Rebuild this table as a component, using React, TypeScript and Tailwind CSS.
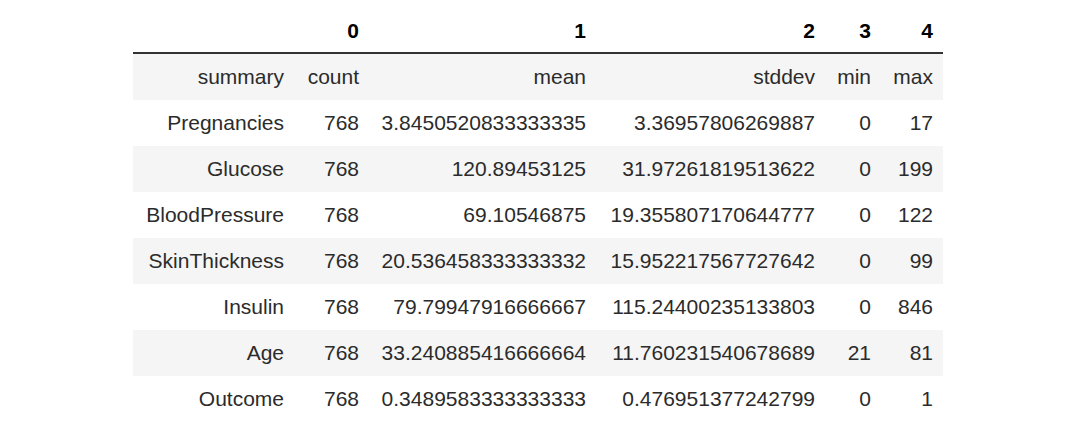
import React from "react";

const header = ["", "0", "1", "2", "3", "4"];

const rows = [
  ["summary", "count", "mean", "stddev", "min", "max"],
  ["Pregnancies", "768", "3.8450520833333335", "3.36957806269887", "0", "17"],
  ["Glucose", "768", "120.89453125", "31.97261819513622", "0", "199"],
  ["BloodPressure", "768", "69.10546875", "19.355807170644777", "0", "122"],
  ["SkinThickness", "768", "20.536458333333332", "15.952217567727642", "0", "99"],
  ["Insulin", "768", "79.79947916666667", "115.24400235133803", "0", "846"],
  ["Age", "768", "33.240885416666664", "11.760231540678689", "21", "81"],
  ["Outcome", "768", "0.3489583333333333", "0.476951377242799", "0", "1"],
];

const widths = ["w-[161px]", "w-[75px]", "w-[227px]", "w-[229px]", "w-[56px]", "w-[62px]"];

function App() {
  return (
    <div className="w-[1080px] h-[447px] bg-white overflow-hidden font-['Liberation_Sans',Arial,sans-serif] text-[21px]">
      <div className="ml-[133px] pt-[9px] w-[810px]">
        <div className="flex h-[45px] items-center border-b-2 border-[#333] font-bold text-black">
          {header.map((h, i) => (
            <div key={i} className={widths[i] + " text-right pr-[10px]"}>
              {h}
            </div>
          ))}
        </div>
        {rows.map((r, ri) => (
          <div
            key={ri}
            className={
              "flex h-[46px] items-center text-[#2b2b2b] " +
              (ri % 2 == 0 ? "bg-[#f5f5f5]" : "bg-white")
            }
          >
            {r.map((c, ci) => (
              <div key={ci} className={widths[ci] + " text-right pr-[10px] whitespace-nowrap"}>
                {c}
              </div>
            ))}
          </div>
        ))}
      </div>
    </div>
  );
}

export default App;
